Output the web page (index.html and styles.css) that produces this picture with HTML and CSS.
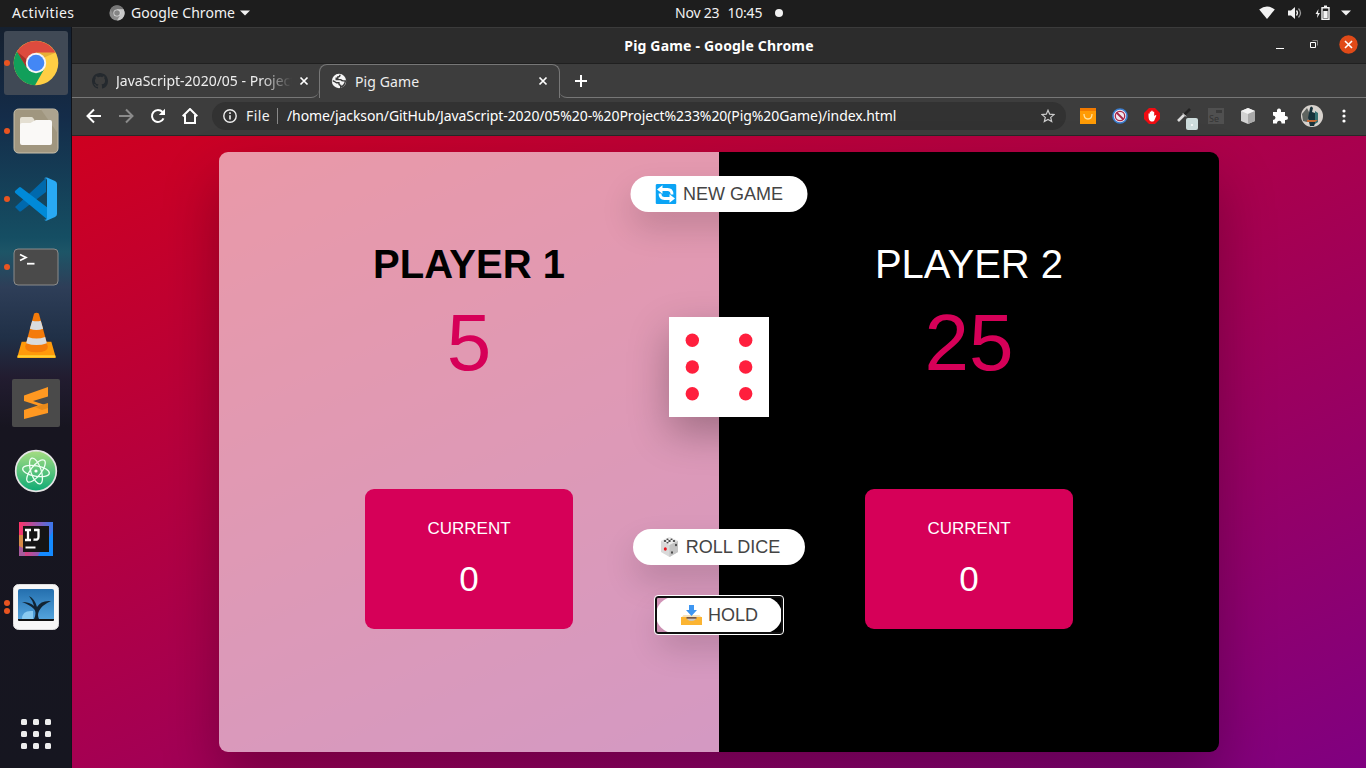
FILE: index.html
```html
<!DOCTYPE html>
<html lang="en">
<head>
<meta charset="utf-8">
<title>Pig Game</title>
<link rel="stylesheet" href="styles.css">
</head>
<body>
<div class="desktop">
  <header class="topbar">
    <span class="activities">Activities</span>
    <svg class="appicon" width="16" height="16" viewBox="0 0 16 16"><circle cx="8" cy="8" r="7.6" fill="#8b8b8b"/><path d="M1.4 4.2A7.6 7.6 0 0 1 14.6 4.2H8L4.7 10z" fill="#777"/><path d="M8 4.2h6.6A7.6 7.6 0 0 1 8 15.6L11.3 10z" fill="#c9c9c9"/><circle cx="8" cy="8" r="3.6" fill="#ddd"/><circle cx="8" cy="8" r="2.8" fill="#858585"/></svg>
    <span class="appname">Google Chrome</span>
    <svg class="caret" width="10" height="6"><path d="M0 .5h10L5 5.5z" fill="#f2f2f2"/></svg>
    <div class="clock"><span>Nov 23</span><span>10:45</span><i></i></div>
    <div class="status">
      <svg width="16" height="14" viewBox="0 0 16 14"><path d="M.2 3.5Q8-2.5 15.8 3.5L8 13z" fill="#f2f2f2"/></svg>
      <svg width="16" height="14" viewBox="0 0 16 14"><path d="M1 4.500h3L8 1v12L4 9.500H1z" fill="#f2f2f2"/><path d="M9.500 4.500q2 2.500 0 5" fill="none" stroke="#f2f2f2" stroke-width="1.300"/><path d="M11.500 2.500q4 4.500 0 9" fill="none" stroke="#999" stroke-width="1.300"/></svg>
      <svg width="16" height="16" viewBox="0 0 16 16"><path d="M3.500 4L.5 9h2l-.5 4 3-5H3z" fill="#f2f2f2"/><path d="M9 1.200h3M7 2.700h7v11.600H7z" fill="none" stroke="#f2f2f2" stroke-width="1.400"/><path d="M8.300 6h4.400v7H8.300z" fill="#f2f2f2"/></svg>
      <svg width="10" height="6"><path d="M0 .5h10L5 5.500z" fill="#f2f2f2"/></svg>
    </div>
  </header>
  <div class="main">
    <nav class="dock">
      <div class="item selected run"><svg width="46" height="46" viewBox="0 0 46 46"><circle cx="23" cy="23" r="22.300" fill="#ffce44"/><path d="M4 11.500A22.300 22.300 0 0 1 42.500 12.700H23L13 28.500z" fill="#dd4b3e"/><path d="M4 11.500A22.300 22.300 0 0 0 22 45.300L31 29.500 14 28z" fill="#119f5a"/><path d="M4 11.500l9 15 2-6z" fill="#a93229"/><path d="M23 12.700h19.500l-12 5z" fill="#e7ae36"/><circle cx="23" cy="23" r="10.200" fill="#f5f5f5"/><circle cx="23" cy="23" r="8.300" fill="#4387f5"/></svg></div>
      <div class="item run"><svg width="46" height="46" viewBox="0 0 46 46"><rect x="1" y="1" width="44" height="44" rx="4.500" fill="#a0967f" stroke="#c9c1ae"/><path d="M28 1.500h13q3.500 0 3.500 3.500v20z" fill="#aca38f"/><path d="M7 11q0-2 2-2h9.500q1.500 0 2 1.500l1 1.500-2 5H7z" fill="#e4dfd2"/><path d="M7 17q0-2 2-2h8.500l4-2.500 1.500-.5h14q2 0 2 2v21q0 2-2 2H9q-2 0-2-2z" fill="#faf9f7"/></svg></div>
      <div class="item run"><svg width="46" height="46" viewBox="0 0 46 46"><path d="M2 31l4 4q1 1 2 .3L33 16V2z" fill="#0069ad"/><path d="M2 15l4-3.500q1-.8 2 0L35 32v12L2.300 17q-.8-1-.3-2z" fill="#008ad8"/><path d="M31 2.500Q32 1 34 1.500l8 3.500q2 1 2 3v30q0 2-2 3l-8 3.500q-2 .5-3-1 3 1 3-2V4.500q0-3-3-2z" fill="#29a9f4"/></svg></div>
      <div class="item run"><svg width="46" height="38" viewBox="0 0 46 38"><rect x="1" y="1" width="44" height="36" rx="4" fill="#4a4a4a" stroke="#8b8b8b"/><path d="M7 6.500l6 3-6 3" fill="none" stroke="#fff" stroke-width="1.700"/><path d="M14 15.700h7.500" stroke="#fff" stroke-width="1.800"/></svg></div>
      <div class="item"><svg width="41" height="46" viewBox="0 0 42 48"><path d="M5.500 31h31L41 47q.3 1-1 1H2q-1.300 0-1-1z" fill="#ff9a0b"/><path d="M1.500 45h39l.5 2.500H1z" fill="#ffcf2f"/><path d="M18.500 1.500q2.500-1.500 5 0l9.300 34.500q.4 6-11.800 6T9.200 36z" fill="#f47b0a"/><path d="M16.500 9q4.500 1.500 9 0l2.400 8.500q-7 2.500-13.800 0zM12 26q9 3.500 18 0l1.800 6.500q-10.800 4-21.600 0z" fill="#d9dbdd"/></svg></div>
      <div class="item"><svg width="48" height="48" viewBox="0 0 48 48"><rect width="48" height="48" rx="2" fill="#4a4a4a"/><path d="M12 16.500L36 8v9.500L21 22l15 5v7l-24 6v-9l14-4.500L12 22z" fill="#ff9821"/><path d="M23 28l13-4v5l-6 2z" fill="#e98a1a"/></svg></div>
      <div class="item"><svg width="44" height="44" viewBox="0 0 44 44"><defs><linearGradient id="at" x2="0" y2="1"><stop stop-color="#a7dd82"/><stop offset="1" stop-color="#0eab75"/></linearGradient></defs><circle cx="22" cy="22" r="20.300" fill="url(#at)" stroke="#e4e4e4" stroke-width="1.700"/><g fill="none" stroke="#effff4" stroke-width="1.300"><ellipse cx="22" cy="22" rx="13.500" ry="5.200" transform="rotate(10 22 22)"/><ellipse cx="22" cy="22" rx="13.500" ry="5.200" transform="rotate(72 22 22)"/><ellipse cx="22" cy="22" rx="13.500" ry="5.200" transform="rotate(-52 22 22)"/></g><circle cx="22" cy="22" r="1.600" fill="#fff"/></svg></div>
      <div class="item"><svg width="36" height="36" viewBox="0 0 36 36"><defs><linearGradient id="ij"><stop stop-color="#ff3368"/><stop offset="1" stop-color="#3978ee"/></linearGradient></defs><path d="M1 1h34v34H1z" fill="url(#ij)"/><path d="M1 14h4v14l-4-3z" fill="#d78b48"/><path d="M1 25l6 3v7H1z" fill="#a85a9c"/><path d="M24 28l11-18v25H20z" fill="#148aff"/><path d="M5 5h26v26H5z" fill="#151515"/><path d="M7 9h6M10 9v10M7 19h6M20.500 8v8q0 3.500-5 2.500M16 9h5" fill="none" stroke="#fff" stroke-width="2.300"/><path d="M7.500 26.500h10" stroke="#fff" stroke-width="2"/></svg></div>
      <div class="item run two"><svg width="46" height="46" viewBox="0 0 46 46"><defs><linearGradient id="tr" x2="0" y2="1"><stop stop-color="#246fae"/><stop offset="1" stop-color="#53a3dc"/></linearGradient></defs><rect x=".5" y=".5" width="45" height="45" rx="5" fill="#f7f7f7" stroke="#ddd"/><path d="M5 7q0-2 2-2h32q2 0 2 2v28H5z" fill="url(#tr)"/><path d="M9 35q0-9 11-8v8z" fill="#89caf0"/><path d="M5 35h36v1q0 1-1 1H6q-1 0-1-1z" fill="#111"/><path d="M21 35q3-7 0-10-4-4-12-7 8 0 12 4-1-5-5-10 6 3 8 11 4-7 14-6-9 4-12 10-2 4 0 8z" fill="#122331"/></svg></div>
      <div class="apps"><i></i><i></i><i></i><i></i><i></i><i></i><i></i><i></i><i></i></div>
    </nav>
    <section class="window">
      <div class="titlebar"><span>Pig Game - Google Chrome</span>
        <div class="wctl"><svg width="8" height="9"><path d="M0 8.500h8" stroke="#fff"/></svg><svg width="9" height="9"><path d="M.5 2.500h5v5h-5z" fill="none" stroke="#fff"/><path d="M2.500.5h5v5" fill="none" stroke="#888"/></svg><svg width="19" height="19"><circle cx="9.500" cy="9.500" r="9.200" fill="#e04a18"/><path d="M6 6l7 7M13 6l-7 7" stroke="#fff" stroke-width="1.600"/></svg></div>
      </div>
      <div class="tabs">
        <div class="tab idle">
          <svg width="16" height="16" viewBox="0 0 16 16"><path fill="#24292e" d="M8 0C3.580 0 0 3.580 0 8c0 3.540 2.290 6.530 5.470 7.590.4.070.55-.17.55-.38v-1.490c-2.010.37-2.530-.49-2.690-.94-.09-.23-.48-.94-.82-1.130-.28-.15-.68-.52-.01-.53.630-.01 1.080.58 1.230.82.720 1.210 1.870.87 2.330.66.070-.52.280-.87.510-1.070-1.780-.2-3.640-.89-3.640-3.950 0-.87.310-1.590.82-2.150-.08-.2-.36-1.020.08-2.120 0 0 .67-.21 2.200.82A7.700 7.700 0 0 1 8 3.870c.68 0 1.360.09 2 .27 1.530-1.040 2.200-.82 2.200-.82.440 1.100.16 1.920.08 2.120.51.56.82 1.270.82 2.150 0 3.070-1.870 3.750-3.650 3.950.290.25.54.73.54 1.480v2.200c0 .21.15.46.55.38A8 8 0 0 0 16 8c0-4.420-3.580-8-8-8z"/></svg>
          <span class="label fade">JavaScript-2020/05 - Project</span>
          <svg class="x" width="10" height="10"><path d="M1.500 1.500l7 7M8.500 1.500l-7 7" stroke="#fff" stroke-width="1.700"/></svg>
        </div>
        <div class="tab active">
          <svg width="16" height="16" viewBox="0 0 16 16"><circle cx="8" cy="8" r="7.200" fill="#f5f5f5"/><path d="M9 1.800q0 2.200-2.200 2.200v1.300H5.200v1.300h4.300q1.300 1.300 2.700 1.300h2.200q-.5 4.500-4.700 6.200v-1.700q-1.800-.2-1.800-2.700H5.400Q3 8 1.700 7.700" fill="none" stroke="#3c3c3c" stroke-width="1.400"/></svg>
          <span class="label">Pig Game</span>
          <svg class="x" width="10" height="10"><path d="M1.500 1.500l7 7M8.500 1.500l-7 7" stroke="#fff" stroke-width="1.700"/></svg>
        </div>
        <div class="rest"><svg width="12" height="12"><path d="M6 0v12M0 6h12" stroke="#fff" stroke-width="2"/></svg></div>
      </div>
      <div class="toolbar">
        <svg width="16" height="16" viewBox="0 0 16 16"><path d="M15 8H2M8 1.500L1.500 8 8 14.500" fill="none" stroke="#fff" stroke-width="2"/></svg>
        <svg width="16" height="16" viewBox="0 0 16 16"><path d="M1 8h13M8 1.500L14.500 8 8 14.500" fill="none" stroke="#8b8b8b" stroke-width="2"/></svg>
        <svg width="16" height="16" viewBox="0 0 16 16"><path d="M13.500 10.300A6 6 0 1 1 12.500 4" fill="none" stroke="#fff" stroke-width="2"/><path d="M15 .8V7H8.800z" fill="#fff"/></svg>
        <svg width="16" height="16" viewBox="0 0 16 16"><path d="M.7 8.300L8 1l7.300 7.300M3 7v8h10V7" fill="none" stroke="#fff" stroke-width="2"/></svg>
        <div class="omni">
          <svg width="14" height="14" viewBox="0 0 14 14"><circle cx="7" cy="7" r="6.200" fill="none" stroke="#eee" stroke-width="1.400"/><path d="M7 6.200v4.300M7 3.300v1.600" stroke="#eee" stroke-width="1.600"/></svg>
          <span class="file">File</span><b></b>
          <span class="url">/home/jackson/GitHub/JavaScript-2020/05%20-%20Project%233%20(Pig%20Game)/index.html</span>
          <svg class="star" width="14" height="14" viewBox="0 0 14 14"><path d="M7 1.200l1.700 4 4.300.4-3.300 2.800 1 4.200L7 10.400l-3.700 2.200 1-4.200L1 5.600l4.300-.4z" fill="none" stroke="#ccc" stroke-width="1.200"/></svg>
        </div>
        <div class="exts">
          <svg width="16" height="16"><path d="M0 0h16v16H0z" fill="#ff9b05"/><path d="M0 0h16v3H0z" fill="#f27a00"/><path d="M4 6q0 5 4 5t4-5" fill="none" stroke="#ffe2a0" stroke-width="1.300"/></svg>
          <svg width="16" height="16"><circle cx="8" cy="8" r="7" fill="#f1e9ef" stroke="#3b7ed0" stroke-width="1.600"/><circle cx="8" cy="8" r="4.700" fill="none" stroke="#a72749" stroke-width="1.300"/><path d="M4.500 4.500l7 7" stroke="#a72749" stroke-width="1.800"/></svg>
          <svg width="16" height="16"><path d="M5 0h6l5 5v6l-5 5H5l-5-5V5z" fill="#f00c12"/><path d="M4.500 8V5.500h1.300V3.700h1.400V2.800h1.500v.9h1.500V8l1.500-1 .7.500-2.100 5q-.5 1-1.500 1H7q-2.500-1-2.500-5.500z" fill="#fff"/></svg>
          <svg width="21" height="22" viewBox="0 0 21 22"><path d="M1 13L8 6" stroke="#ddd" stroke-width="2.600"/><path d="M7 7l6-6" stroke="#222" stroke-width="2.600"/><path d="M6 5.500l3 3" stroke="#eee"/><rect x="9" y="10" width="12" height="12" rx="2" fill="#cddcdc"/><circle cx="15" cy="17" r="1" fill="#fff"/></svg>
          <svg width="16" height="16"><path d="M0 0h16v16H0z" fill="#505050"/><path d="M8 2h6v3H8z" fill="#3b3b3b"/><text x="1" y="14" class="se">Se</text></svg>
          <svg width="16" height="16"><path d="M8 0l7 3v10l-7 3-7-3V3z" fill="#d2d2d2"/><path d="M8 0l7 3-7 3-7-3z" fill="#f3f3f3"/><path d="M8 6l7-3v10l-7 3z" fill="#a9a9a9"/></svg>
          <svg width="16" height="16" viewBox="0 0 16 16"><path d="M1 4h4q-.5-3.500 2-3.500T9 4h4v4q3-.3 3 2t-3 2v3.500H9.500q0-2.700-2.200-2.700T5 15.500H1V12q2.500-.2 2.500-2.200T1 7.500z" fill="#fff"/></svg>
          <svg width="22" height="22"><circle cx="11" cy="11" r="11" fill="#d7d2cd"/><path d="M1 9l5-6 3 6-3 8-4-1z" fill="#5f6460"/><path d="M9 3q1-3 3 0l-1 4 3 1 1 8-2 5H9L7 13z" fill="#17313a"/><path d="M14 6l3 2v9l-3 2z" fill="#347072"/><path d="M6 15h11l-3 2H6z" fill="#c76833"/></svg>
          <svg width="4" height="14"><g fill="#fff"><circle cx="2" cy="2" r="1.600"/><circle cx="2" cy="7" r="1.600"/><circle cx="2" cy="12" r="1.600"/></g></svg>
        </div>
      </div>
      <main class="page">
        <div class="game">
          <section class="player one"><h2>PLAYER 1</h2><p class="score">5</p><div class="current"><p>CURRENT</p><p class="cur">0</p></div></section>
          <section class="player two"><h2>PLAYER 2</h2><p class="score">25</p><div class="current"><p>CURRENT</p><p class="cur">0</p></div></section>
          <button class="btn new"><svg width="21" height="20" viewBox="0 0 21 20"><rect width="21" height="20" rx="1.500" fill="#0ba4f5"/><path d="M5 5.500h7q4.500 0 4.500 5M16 14.500H9q-4.500 0-4.500-5" fill="none" stroke="#fff" stroke-width="2.800"/><path d="M1.500 5.500L7 1.300v8.400zM19.500 14.500L14 10.300v8.400z" fill="#fff"/></svg>NEW GAME</button>
          <svg class="dice" width="100" height="100"><path d="M0 0h100v100H0z" fill="#fff"/><g fill="#ff1f3d"><circle cx="23.300" cy="23.300" r="6.700"/><circle cx="76.700" cy="23.300" r="6.700"/><circle cx="23.300" cy="50" r="6.700"/><circle cx="76.700" cy="50" r="6.700"/><circle cx="23.300" cy="76.700" r="6.700"/><circle cx="76.700" cy="76.700" r="6.700"/></g></svg>
          <button class="btn roll"><svg width="21" height="20" viewBox="0 0 21 20"><path d="M10.500 0L19 4v11l-8.500 5L2 15V4z" fill="#d9d9d9"/><path d="M10.500 0L19 4l-8.500 4L2 4z" fill="#ececec"/><path d="M10.500 8L19 4v11l-8.500 5z" fill="#c3c3c3"/><g fill="#444"><ellipse cx="10.500" cy="4" rx="1.300" ry=".9"/><ellipse cx="6" cy="4" rx="1.300" ry=".9"/><ellipse cx="15" cy="4" rx="1.300" ry=".9"/><ellipse cx="8.500" cy="2.200" rx="1.200" ry=".7"/><ellipse cx="12.500" cy="2.200" rx="1.200" ry=".7"/><ellipse cx="8.500" cy="5.800" rx="1.200" ry=".7"/><ellipse cx="17" cy="8" rx="1" ry="1.300"/><ellipse cx="13" cy="15.500" rx="1" ry="1.300"/></g><ellipse cx="6.300" cy="12" rx="1.500" ry="1.700" fill="#e8151d"/></svg>ROLL DICE</button>
          <button class="btn hold"><svg width="21" height="20" viewBox="0 0 21 20"><path d="M2.500 10h16l2.500 3H0z" fill="#f6e2bd"/><path d="M0 12h21v8H0z" fill="#fbb432"/><path d="M5.500 12h10q-.5 4-5 4t-5-4z" fill="#c9c6c4"/><path d="M5.500 12h10v1.700h-10z" fill="#735442"/><path d="M8 0h5v5h3l-5.500 6L5 5h3z" fill="#3e96f2"/></svg>HOLD</button>
        </div>
      </main>
    </section>
  </div>
</div>
</body>
</html>
```

FILE: styles.css
```css
* { box-sizing: border-box; }
body { margin: 0; overflow: hidden; font-family: "Noto Sans", sans-serif; color: #f2f2f2; }
svg { display: block; flex: none; }
.desktop { width: 1366px; height: 768px; display: flex; flex-direction: column; }
.topbar { position: relative; height: 27px; flex: none; background: #1d1d1d; display: flex; align-items: center; padding: 0 0 1px 12px; font-size: 14px; line-height: 26px; white-space: nowrap; }
.activities { width: 97px; letter-spacing: .4px; }
.appname { margin-left: 6px; width: 104px; letter-spacing: .05px; }
.caret { margin-left: 5px; }
.clock { position: absolute; left: 675px; top: 0; display: flex; align-items: center; gap: 8px; height: 26px; line-height: 24px; letter-spacing: -.2px; }
.clock i { width: 8px; height: 8px; border-radius: 50%; background: #f2f2f2; margin-left: 5px; }
.status { margin-left: auto; margin-right: 15px; display: flex; align-items: center; gap: 12px; }
.status svg:nth-child(3) { margin-right: -2px; }
.main { flex: 1; min-height: 0; display: flex; }
.dock { width: 72px; flex: none; display: flex; flex-direction: column; padding: 4px 4px 0; gap: 4px; border-right: 1px solid #10131a; background: linear-gradient(#15202f 0, #142c49 90px, #154e63 210px, #1d5567 225px, #2e3e58 260px, #203047 310px, #221c30 350px, #171520 400px, #161620 100%); }
.item { position: relative; width: 64px; height: 64px; display: flex; align-items: center; justify-content: center; border-radius: 3px; }
.selected { background: #404955; }
.run::before { content: ""; position: absolute; left: 0; top: 29px; width: 6px; height: 6px; border-radius: 50%; background: #e95420; }
.two.run::before { top: 25px; box-shadow: 0 8px #e95420; }
.apps { margin: auto auto 19px; display: grid; grid-template-columns: repeat(3, 6px); gap: 6px; }
.apps i { height: 6px; background: #eee; border-radius: 1.5px; }
.window { flex: 1; min-width: 0; display: flex; flex-direction: column; }
.titlebar { position: relative; height: 37px; flex: none; background: #2c2c2c; border-top: 1px solid #3b3b3b; border-bottom: 1px solid #202020; text-align: center; font-weight: 700; font-size: 14px; line-height: 35px; color: #fff; letter-spacing: .18px; }
.wctl { position: absolute; right: 8px; top: 7px; display: flex; align-items: center; gap: 25px; }
.wctl svg:nth-child(2) { margin-left: 1px; margin-right: -5px; }
.tabs { height: 34px; flex: none; display: flex; background: #3d3d3d; }
.tab { display: flex; align-items: center; font-size: 14px; position: relative; }
.idle { width: 247px; padding-left: 20px; border-bottom: 1px solid #777; border-bottom-right-radius: 8px; }
.active { width: 241px; padding: 0 0 1px 11px; border: 1px solid #777; border-bottom: 0; border-radius: 8px 8px 0 0; }
.label { margin-left: 8px; width: 176px; white-space: nowrap; overflow: hidden; color: #eee; }
.active .label { width: 179px; letter-spacing: .1px; }
.fade { letter-spacing: 0; -webkit-mask-image: linear-gradient(90deg, #000 82%, transparent); mask-image: linear-gradient(90deg, #000 82%, transparent); }
.x { margin-left: 7px; }
.active .x { margin-left: 4px; }
.rest { flex: 1; margin-left: -1px; border-bottom: 1px solid #777; border-bottom-left-radius: 8px; padding: 11px 16px; }
.toolbar { height: 38px; flex: none; background: #3d3d3d; border-bottom: 1px solid #282828; display: flex; align-items: center; padding: 0 0 1px 14px; gap: 16px; }
.omni { width: 854px; height: 28px; margin-left: -2px; border-radius: 14px; background: #323232; display: flex; align-items: center; padding: 0 11px; font-size: 14px; line-height: 18px; white-space: nowrap; color: #f2f2f2; }
.omni span { padding-bottom: 1px; }
.file { margin-left: 9px; width: 24px; letter-spacing: .4px; }
.omni b { width: 1px; height: 16px; background: #888; margin: 0 9px 0 7px; }
.url { letter-spacing: -.09px; color: #fff; }
.star { margin-left: auto; }
.exts { display: flex; align-items: center; gap: 16px; margin-left: -2px; }
.exts svg:nth-child(4) { margin: 6px -6px 0 1px; }
.exts svg:nth-child(7) { margin-right: -3px; }
.exts svg:nth-child(8) { margin-right: 3px; }
.se { font: 9px "Noto Sans", sans-serif; fill: #343434; }
.page { flex: 1; min-height: 0; padding: 16px 147px; background: linear-gradient(156deg, #ce0020, #800080); font-family: "Liberation Sans", sans-serif; }
.game { position: relative; width: 1000px; height: 600px; display: flex; border-radius: 9px; box-shadow: 0 28px 56px rgba(0,0,0,.27); }
.player { flex: 1; display: flex; flex-direction: column; align-items: center; padding-top: 89px; }
.one { background: rgba(255,255,255,.6); border-radius: 9px 0 0 9px; color: #000; }
.player.two { background: #000; border-radius: 0 9px 9px 0; color: #fff; }
.player h2 { margin: 0; font-size: 40px; line-height: 46px; font-weight: 400; }
.player.one h2 { font-weight: 700; }
.score { margin: 10px 0 0; font-size: 80px; line-height: 92px; color: #d60058; }
.current { margin-top: 100px; width: 208px; height: 140px; border-radius: 9px; background: #d60058; color: #fff; text-align: center; padding-top: 30px; }
.current p { margin: 0; font-size: 17px; line-height: 20px; }
.current .cur { margin-top: 20px; font-size: 35px; line-height: 40px; }
.btn { position: absolute; left: 50%; transform: translateX(-50%); height: 36px; border: 0; border-radius: 18px; background: #fff; color: #444; font: 18px "Liberation Sans", sans-serif; display: flex; align-items: center; justify-content: center; gap: 6px; padding: 0 0 0 1px; white-space: nowrap; box-shadow: 0 16px 32px rgba(0,0,0,.15); }
.new { top: 24px; width: 177px; }
.roll { top: 377px; width: 172px; }
.hold { top: 445px; width: 126px; }
.hold::after { content: ""; position: absolute; inset: -2px; border: 1px solid #fff; border-radius: 4px; box-shadow: inset 0 0 0 2px #101010; }
.dice { position: absolute; left: 450px; top: 165px; box-shadow: 0 16px 40px rgba(0,0,0,.28); }
```
